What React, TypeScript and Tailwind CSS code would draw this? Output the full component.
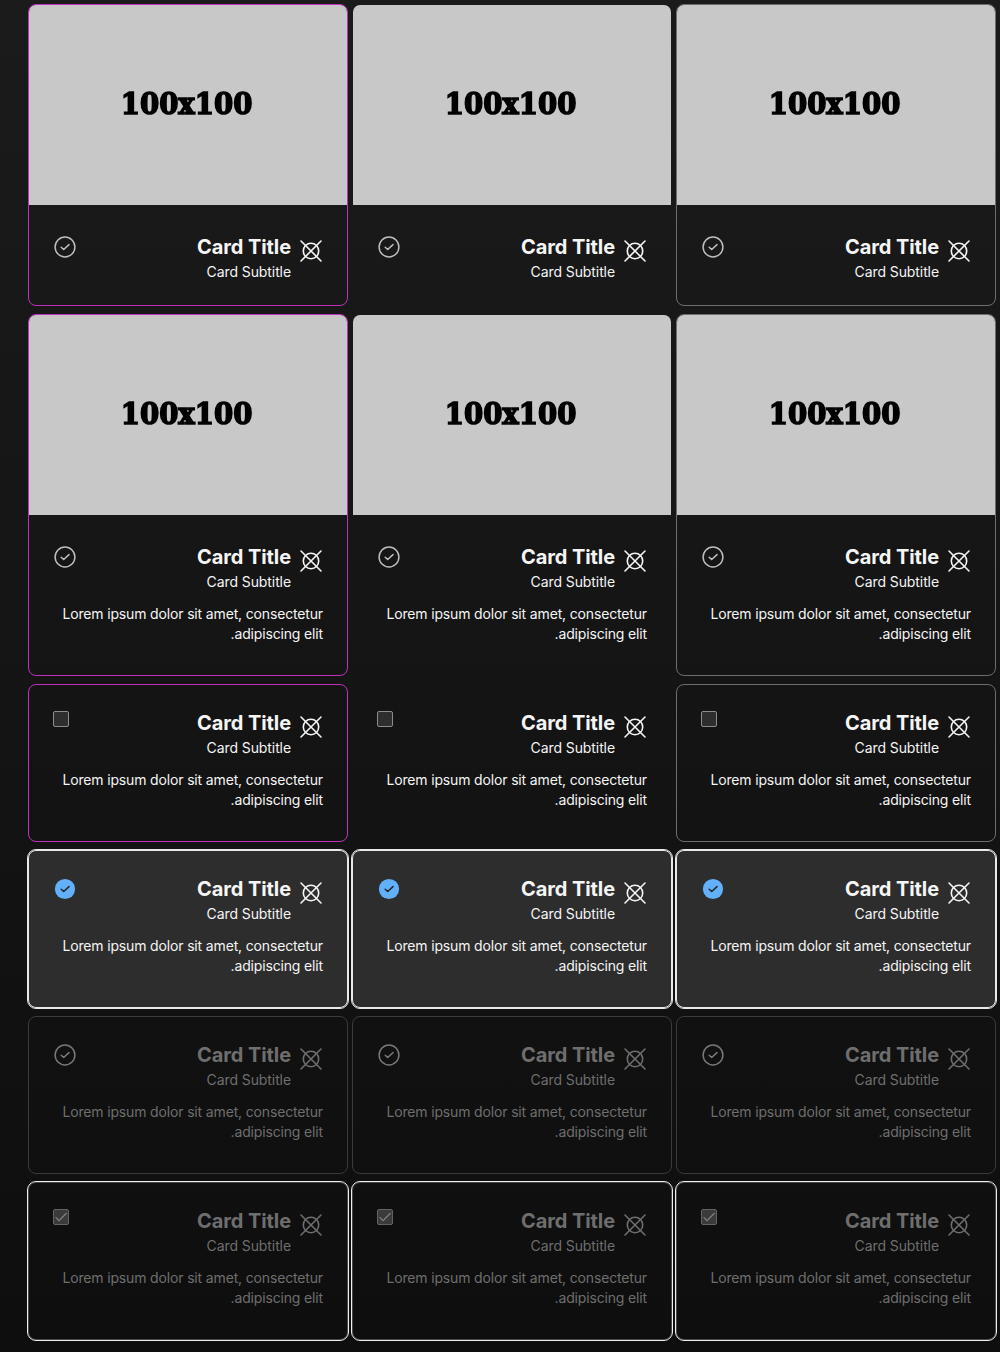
import React from "react";

type Control = "radio" | "radio-on" | "box" | "box-on";

interface Row {
  image?: boolean;
  body?: boolean;
  control: Control;
  selected?: boolean;
  disabled?: boolean;
  ring?: boolean;
}

const rows: Row[] = [
  { image: true, control: "radio" },
  { image: true, body: true, control: "radio" },
  { body: true, control: "box" },
  { body: true, control: "radio-on", selected: true },
  { body: true, control: "radio", disabled: true },
  { body: true, control: "box-on", disabled: true, ring: true },
];

const borders = ["border-[#c030c0]", "border-transparent", "border-[#6e6e6e]"];

function TargetIcon() {
  return (
    <svg className="mt-1.5 size-6 shrink-0" viewBox="0 0 24 24" fill="none" stroke="currentColor" strokeWidth="1.6" strokeLinecap="round">
      <circle cx="12" cy="12" r="7.7" />
      <path d="M2 2l20 20M22 2L2 22" />
    </svg>
  );
}

function Selector({ kind, disabled }: { kind: Control; disabled?: boolean }) {
  if (kind === "box" || kind === "box-on") {
    return (
      <span
        className={`mt-0.5 flex size-4 items-center justify-center rounded-[2px] border ${
          disabled ? "border-[#636363] bg-[#3b3b3b]" : "border-[#8c8c8c] bg-[#2e2e2e]"
        }`}
      >
        {kind === "box-on" && (
          <svg className="size-3.5 shrink-0" viewBox="0 0 14 14" fill="none" stroke="#858585" strokeWidth="1.1">
            <path d="M1.6 7.2L5 10.6L12.6 3" />
          </svg>
        )}
      </span>
    );
  }
  const on = kind === "radio-on";
  return (
    <svg className={`mt-0.5 size-6 ${disabled ? "text-[#787878]" : "text-[#bdbdbd]"}`} viewBox="0 0 24 24" fill="none">
      {on ? <circle cx="12" cy="12" r="10.1" fill="#62b0fb" /> : <circle cx="12" cy="12" r="9.9" stroke="currentColor" strokeWidth="1.5" />}
      <path d="M8.2 12.2L10.7 14.5L16 9.6" stroke={on ? "#262626" : "currentColor"} strokeWidth="1.5" strokeLinecap="round" strokeLinejoin="round" />
    </svg>
  );
}

function Card({ row, col }: { row: Row; col: number }) {
  const border = row.selected
    ? "border-[#e9e9e9] bg-[#2d2d2d] outline-1 outline-[#e9e9e9]"
    : row.ring
      ? "border-[#484848] outline-1 outline-[#efefef]"
      : row.disabled
        ? "border-[#3b3b3b]"
        : borders[col];
  return (
    <article className={`flex flex-col overflow-hidden rounded-lg border ${border}`}>
      {row.image && (
        <div className="flex h-[200px] shrink-0 items-center justify-center bg-[#c8c8c8] pr-[3px] pb-0.5">
          <span
            dir="ltr"
            className="scale-x-[0.92] font-['DejaVu_Serif'] text-[30px] leading-none font-bold whitespace-nowrap text-black blur-[0.5px] [-webkit-text-stroke:1.6px_black]"
          >
            100x100
          </span>
        </div>
      )}
      <div className={`px-6 ${row.image ? "pt-7" : "pt-6"} ${row.body ? "pb-[31px]" : "pb-[23px]"} ${row.disabled ? "text-[#6e6e6e]" : "text-[#f5f5f5]"}`}>
        <header className="flex items-start justify-between">
          <div className="flex gap-2">
            <TargetIcon />
            <div>
              <h2 className="text-xl leading-7 font-bold tracking-[-0.1px]">Card Title</h2>
              <p className="mt-px text-sm leading-5 tracking-[-0.09px]">Card Subtitle</p>
            </div>
          </div>
          <Selector kind={row.control} disabled={row.disabled} />
        </header>
        {row.body && <p className="mt-3 text-sm leading-5 tracking-[-0.154px]">Lorem ipsum dolor sit amet, consectetur adipiscing elit.</p>}
      </div>
    </article>
  );
}

export default function App() {
  return (
    <main className="h-[1352px] w-[1000px] overflow-hidden bg-linear-to-b from-[#1b1b1b] to-[#0e0e0e] pt-1 pr-1 pl-7 font-['Inter',sans-serif]">
      <div className="flex flex-col gap-2">
        {rows.map((row, r) => (
          <section key={r} dir="rtl" className="grid grid-cols-3 gap-1">
            {[2, 1, 0].map((col) => (
              <Card key={col} row={row} col={col} />
            ))}
          </section>
        ))}
      </div>
    </main>
  );
}
